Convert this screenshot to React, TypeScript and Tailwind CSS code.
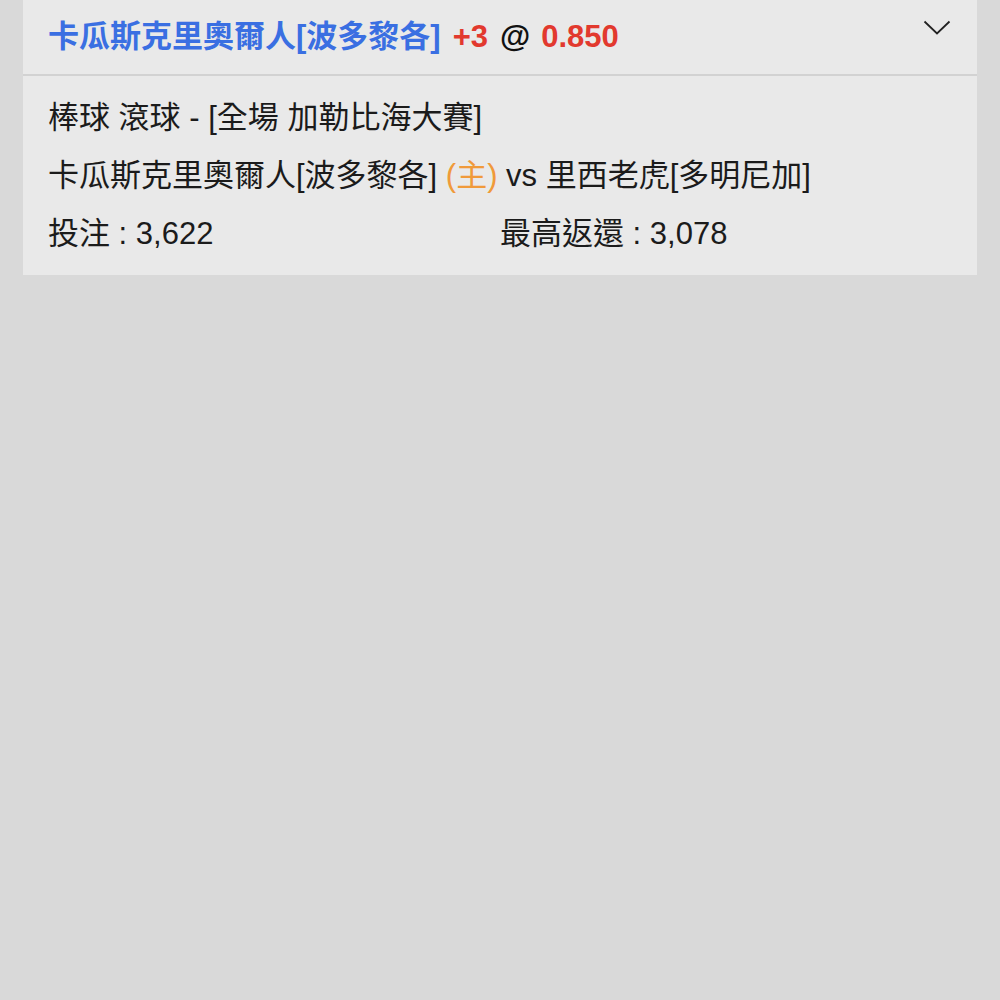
import React from 'react'

const font = { fontFamily: '"Liberation Sans", "Noto Sans CJK TC", sans-serif' }

const App = () => {
  return (
    <div className="min-h-screen w-full bg-[#d9d9d9] px-[23px]" style={font}>
      <div className="w-full bg-[#e9e9e9]">
        {/* header */}
        <div className="flex h-[76px] items-center justify-between pl-[25px] pr-[26px] border-b-2 border-[#d2d2d2] pb-[2px]">
          <div className="flex items-baseline text-[31px] font-bold leading-none">
            <span className="text-[#3a6fe2]">卡瓜斯克里奧爾人[波多黎各]</span>
            <span className="ml-[12px] text-[#e2392e]">+3</span>
            <span className="ml-[12px] text-[#111]">@</span>
            <span className="ml-[11px] text-[#e2392e]">0.850</span>
          </div>
          <svg width="28" height="16" viewBox="0 0 28 16" className="mb-[16px]" fill="none" stroke="#222" strokeWidth="1.8">
            <path d="M1.5 1.5 L14 13.5 L26.5 1.5" />
          </svg>
        </div>
        {/* body */}
        <div className="flex flex-col px-[25px] pt-[13px] pb-[12px] text-[31px] leading-[58px] text-[#1b1b1b]">
          <div>棒球 滾球 - [全場 加勒比海大賽]</div>
          <div>
            卡瓜斯克里奧爾人[波多黎各] <span className="text-[#f09a3a]">(主)</span> vs 里西老虎[多明尼加]
          </div>
          <div className="grid grid-cols-2">
            <div>投注 : 3,622</div>
            <div>最高返還 : 3,078</div>
          </div>
        </div>
      </div>
    </div>
  )
}

export default App
